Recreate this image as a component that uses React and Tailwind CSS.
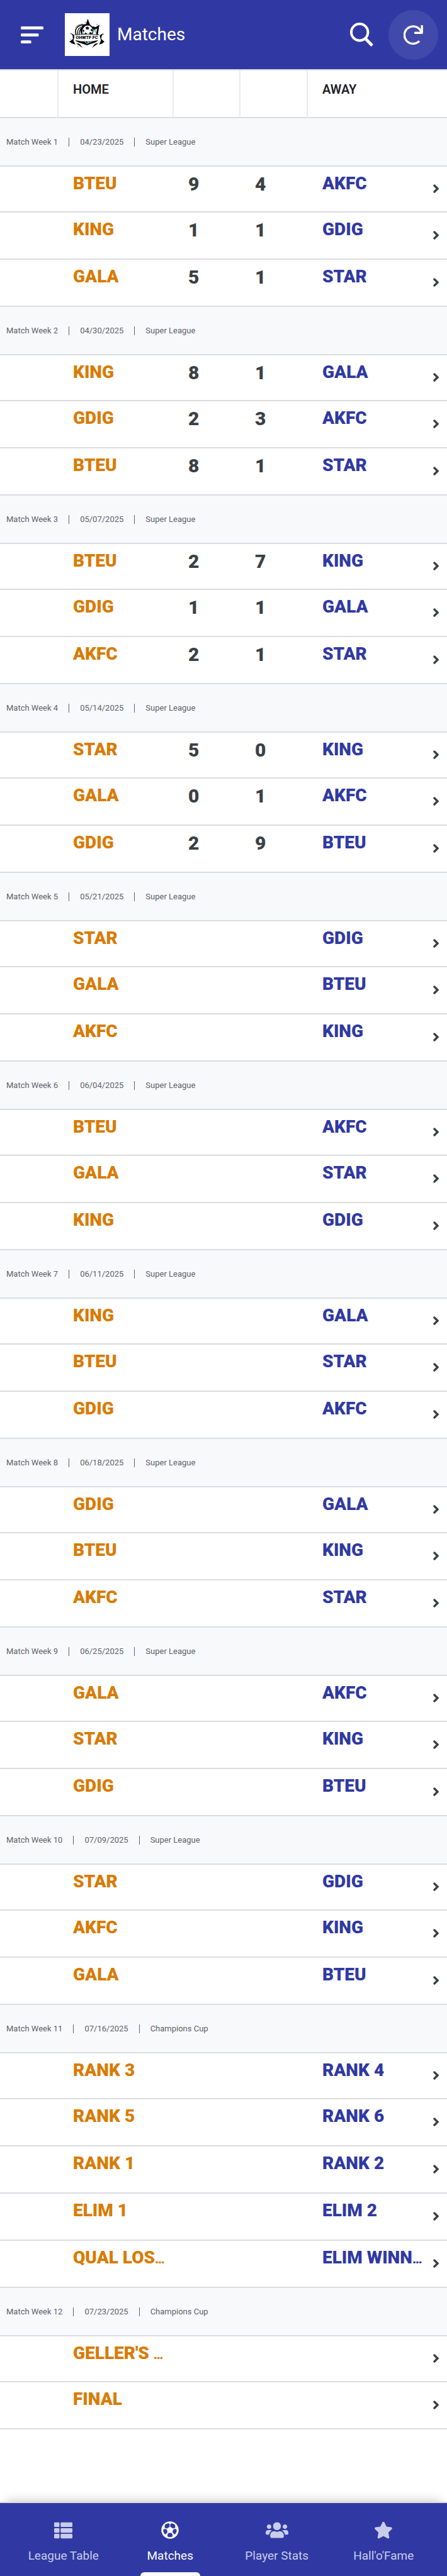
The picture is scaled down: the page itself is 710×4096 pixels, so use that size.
import React from "react";
import { FaThList, FaUsers, FaStar } from "react-icons/fa";

const LEAGUE = "Super League";
const CUP = "Champions Cup";

const WEEKS = [
  { date: "04/23/2025", cup: LEAGUE, matches: [["BTEU", 9, 4, "AKFC"], ["KING", 1, 1, "GDIG"], ["GALA", 5, 1, "STAR"]] },
  { date: "04/30/2025", cup: LEAGUE, matches: [["KING", 8, 1, "GALA"], ["GDIG", 2, 3, "AKFC"], ["BTEU", 8, 1, "STAR"]] },
  { date: "05/07/2025", cup: LEAGUE, matches: [["BTEU", 2, 7, "KING"], ["GDIG", 1, 1, "GALA"], ["AKFC", 2, 1, "STAR"]] },
  { date: "05/14/2025", cup: LEAGUE, matches: [["STAR", 5, 0, "KING"], ["GALA", 0, 1, "AKFC"], ["GDIG", 2, 9, "BTEU"]] },
  { date: "05/21/2025", cup: LEAGUE, matches: [["STAR", "", "", "GDIG"], ["GALA", "", "", "BTEU"], ["AKFC", "", "", "KING"]] },
  { date: "06/04/2025", cup: LEAGUE, matches: [["BTEU", "", "", "AKFC"], ["GALA", "", "", "STAR"], ["KING", "", "", "GDIG"]] },
  { date: "06/11/2025", cup: LEAGUE, matches: [["KING", "", "", "GALA"], ["BTEU", "", "", "STAR"], ["GDIG", "", "", "AKFC"]] },
  { date: "06/18/2025", cup: LEAGUE, matches: [["GDIG", "", "", "GALA"], ["BTEU", "", "", "KING"], ["AKFC", "", "", "STAR"]] },
  { date: "06/25/2025", cup: LEAGUE, matches: [["GALA", "", "", "AKFC"], ["STAR", "", "", "KING"], ["GDIG", "", "", "BTEU"]] },
  { date: "07/09/2025", cup: LEAGUE, matches: [["STAR", "", "", "GDIG"], ["AKFC", "", "", "KING"], ["GALA", "", "", "BTEU"]] },
  {
    date: "07/16/2025",
    cup: CUP,
    matches: [
      ["RANK 3", "", "", "RANK 4"],
      ["RANK 5", "", "", "RANK 6"],
      ["RANK 1", "", "", "RANK 2"],
      ["ELIM 1", "", "", "ELIM 2"],
      ["QUAL LOS…", "", "", "ELIM WINN…"],
    ],
  },
  { date: "07/23/2025", cup: CUP, matches: [["GELLER'S …", "", "", ""], ["FINAL", "", "", ""]] },
];

function MenuIcon() {
  return (
    <svg width="36" height="27" viewBox="0 0 36 27" fill="currentColor" aria-hidden="true">
      <rect width="36" height="4.7" rx="1.5" />
      <rect y="11.2" width="28.5" height="4.7" rx="1.5" />
      <rect y="22.3" width="16.6" height="4.7" rx="1.5" />
    </svg>
  );
}

function SearchIcon() {
  return (
    <svg width="37" height="38" viewBox="0 0 37 38" fill="none" stroke="currentColor" aria-hidden="true">
      <circle cx="15.2" cy="15.2" r="13.2" strokeWidth="4" />
      <path d="M24 25 L35.2 36.5" strokeWidth="4.8" />
    </svg>
  );
}

function RefreshIcon() {
  return (
    <svg width="31" height="31" viewBox="0 0 31 31" fill="none" stroke="currentColor" strokeWidth="3.4" aria-hidden="true">
      <path d="M25.1 25.3 A13.8 13.8 0 1 1 28 10.6" />
      <path d="M18.4 12.2 H29.2 V0.4" strokeLinejoin="round" strokeLinecap="round" />
    </svg>
  );
}

function BallIcon() {
  return (
    <svg width="28" height="28" viewBox="-63 -63 126 126" aria-hidden="true">
      <circle r="62" fill="currentColor" />
      <g fill="#3039a3" stroke="#3039a3" strokeWidth="3" strokeLinejoin="round">
        <path d="M-36 -33 L-31 -41 L-13 -47 L-4 -43 L-4 -24 L-21 -13 L-36 -17 Z" />
        <path d="M36 -33 L31 -41 L13 -47 L4 -43 L4 -24 L21 -13 L36 -17 Z" />
        <path d="M-46 -1 L-40 -8 L-25 -4 L-19 14 L-29 28 L-38 27 L-46 10 Z" />
        <path d="M46 -1 L40 -8 L25 -4 L19 14 L29 28 L38 27 L46 10 Z" />
        <path d="M-11 22 L11 22 L18 36 L14 47 L0 49 L-14 47 L-18 36 Z" />
      </g>
    </svg>
  );
}

function ChevronIcon() {
  return (
    <svg width="9" height="14" viewBox="0 0 9 14" fill="none" stroke="currentColor" strokeWidth="3.4" strokeLinecap="round" aria-hidden="true">
      <path d="M2 2 L7 7 L2 12" />
    </svg>
  );
}

function Logo() {
  return (
    <svg className="h-[68px] w-[71px] shrink-0 bg-white" viewBox="0 0 324 312" role="img" aria-label="OHWTF FC">
      <g fill="#0a0a0a">
        <path d="M166 40 L152 84 Q166 76 184 88 Z" />
        <path d="M251 84 L240 156 L228 160 L234 112 L214 124 L190 100 L206 96 L222 102 Z" />
        <path d="M42 144 L72 162 L68 176 L62 200 L76 228 L54 222 L32 208 L58 188 L56 164 Z" />
        <path d="M282 144 L252 162 L256 176 L262 200 L248 228 L270 222 L288 208 L264 188 L268 164 Z" />
        <path d="M82 222 Q96 218 108 226 L130 254 L98 232 Z" />
        <path d="M242 222 Q228 218 216 226 L196 254 L226 232 Z" />
        <path d="M72 196 Q162 216 244 196 L224 212 L160 234 L96 212 Z" />
        <circle cx="160" cy="126" r="48" />
      </g>
      <g fill="none" stroke="#0a0a0a">
        <path d="M80 156 Q68 114 100 94 Q134 80 166 88" strokeWidth="7" />
        <path d="M92 156 Q86 116 116 102" strokeWidth="6" />
        <path d="M104 158 Q102 124 124 106" strokeWidth="6" />
        <path d="M74 106 Q94 80 132 80" strokeWidth="3" />
        <path d="M232 156 V134" strokeWidth="8" />
        <path d="M148 72 L152 64 M230 84 L238 80 M44 186 L38 192 M276 158 L284 154 M90 240 L98 244 M50 152 L38 146" strokeWidth="3" />
      </g>
      <g fill="#7cc8c4">
        <path d="M126 156 Q118 116 148 96 Q130 120 138 156 Z" />
        <path d="M228 112 L224 150 L208 124 Z" />
        <path d="M140 208 H200 L162 224 Z" />
        <path d="M72 204 L92 208 L84 212 Z" />
        <path d="M176 76 L184 84 L188 78 Z" />
      </g>
      <circle cx="166" cy="126" r="36" fill="#fff" />
      <g fill="#0a0a0a">
        <path d="M150 104 L164 98 L176 106 L172 118 L156 118 Z" />
        <path d="M196 112 L202 128 L192 132 L186 120 Z" />
        <path d="M150 140 L160 148 L156 162 L140 156 Z" />
        <path d="M182 138 L196 142 L190 156 L176 150 Z" />
        <path d="M132 118 L142 126 L136 138 L130 132 Z" />
      </g>
      <path d="M66 160 Q160 144 254 160 L250 192 Q160 208 70 192 Z" fill="#fff" />
      <path d="M70 158 Q160 146 250 158" fill="none" stroke="#0a0a0a" strokeWidth="4" />
      <text x="159" y="189" textAnchor="middle" fontFamily="Roboto, sans-serif" fontWeight="900" fontSize="33" fill="#0a0a0a">
        OHWTF FC
      </text>
      <path d="M159 202 l3 6 h6 l-5 4 l2 6 l-6 -4 l-6 4 l2 -6 l-5 -4 h6 Z" fill="#0a0a0a" />
      <circle cx="142" cy="210" r="3" fill="#0a0a0a" />
      <circle cx="178" cy="210" r="3" fill="#0a0a0a" />
    </svg>
  );
}

function TeamName({ children }) {
  const cut = children.endsWith("…");
  return (
    <span className="block whitespace-nowrap">
      {cut ? children.slice(0, -1) : children}
      {cut && <span className="text-[20px]">…</span>}
    </span>
  );
}

function WeekRow({ number, date, cup }) {
  return (
    <tr>
      <th colSpan={6} scope="colgroup" className="h-[77px] border-b-2 border-[#dadce0] bg-[#f8f9fb] px-[10px] align-middle font-normal">
        <div className="flex items-center gap-[17px] text-[13px] leading-4 text-[#5f6368]">
          <span>Match Week {number}</span>
          <span className="h-[14px] w-px bg-[#5f6368]" />
          <span>{date}</span>
          <span className="h-[14px] w-px bg-[#5f6368]" />
          <span>{cup}</span>
        </div>
      </th>
    </tr>
  );
}

const CELL = "border-b-2 border-[#dadce0] p-0 pl-[23px] align-top";

function MatchRow({ match, first }) {
  const [home, homeGoals, awayGoals, away] = match;
  return (
    <tr className={first ? "h-[73px]" : "h-[75px]"}>
      <td className="border-b-2 border-[#dadce0]" />
      <td className={`${CELL} pt-[9px] text-[28px] leading-9 font-black text-[#d97b04]`}>
        <TeamName>{home}</TeamName>
      </td>
      <td className={`${CELL} pt-[10px] text-[30px] leading-9 font-black text-[#3c4043]`}>{homeGoals}</td>
      <td className={`${CELL} pt-[10px] text-[30px] leading-9 font-black text-[#3c4043]`}>{awayGoals}</td>
      <td className={`${CELL} pt-[9px] text-[28px] leading-9 font-black text-[#3039a3]`}>
        <TeamName>{away}</TeamName>
      </td>
      <td className="border-b-2 border-[#dadce0] p-0 pr-[13px] pb-[2px] align-middle">
        <button type="button" aria-label="Open match" className="ml-auto block text-[#3c4043]">
          <ChevronIcon />
        </button>
      </td>
    </tr>
  );
}

const HEAD = "h-[76px] border-b-2 border-b-[#dadce0] p-0 pt-4 pl-[23px] align-top text-[20px] leading-7 font-semibold";
const HEAD_LINE = "border-r-2 border-r-[#ebebeb]";

function MatchTable() {
  return (
    <table className="w-full table-fixed border-separate border-spacing-0 border-t-2 border-[#dadce0] text-left">
      <colgroup>
        <col className="w-[93px]" />
        <col className="w-[183px]" />
        <col className="w-[106px]" />
        <col className="w-[107px]" />
        <col />
        <col className="w-[40px]" />
      </colgroup>
      <thead className="text-[#202124]">
        <tr>
          <td className={`${HEAD} ${HEAD_LINE}`} />
          <th scope="col" className={`${HEAD} ${HEAD_LINE}`}>HOME</th>
          <td className={`${HEAD} ${HEAD_LINE}`} />
          <td className={`${HEAD} ${HEAD_LINE}`} />
          <th scope="col" colSpan={2} className={HEAD}>AWAY</th>
        </tr>
      </thead>
      {WEEKS.map((week, w) => (
        <tbody key={week.date}>
          <WeekRow number={w + 1} date={week.date} cup={week.cup} />
          {week.matches.map((match, m) => (
            <MatchRow key={m} match={match} first={m === 0} />
          ))}
        </tbody>
      ))}
    </table>
  );
}

const TABS = [
  { label: "League Table", icon: <FaThList size={29} /> },
  { label: "Matches", icon: <BallIcon />, active: true },
  { label: "Player Stats", icon: <FaUsers size={36} /> },
  { label: "Hall'o'Fame", icon: <FaStar size={30} /> },
];

function TabBar() {
  return (
    <nav className="sticky bottom-0 grid grid-cols-4 border-t-2 border-[#dadce0] bg-[#3039a3] px-4 shadow-[0_-10px_16px_-10px_rgba(0,0,0,0.25)]">
      {TABS.map((tab) => (
        <a
          key={tab.label}
          href="#"
          aria-current={tab.active ? "page" : undefined}
          className={`relative flex flex-col items-center gap-[14px] pt-7 pb-5 ${tab.active ? "text-white" : "text-[#c9cdea]"}`}
        >
          <span className="flex h-[30px] items-center">{tab.icon}</span>
          <span className="text-[19px] leading-6">{tab.label}</span>
          {tab.active && <span className="absolute bottom-0 h-[6px] w-[95px] rounded-t-[6px] bg-white" />}
        </a>
      ))}
    </nav>
  );
}

export default function App() {
  return (
    <div className="flex min-h-screen flex-col bg-white font-[Roboto,sans-serif]">
      <header className="flex h-[110px] items-center bg-[#3039a3] pr-[14px] pl-[33px] text-white">
        <button type="button" aria-label="Menu">
          <MenuIcon />
        </button>
        <div className="ml-[34px] flex items-center gap-3">
          <Logo />
          <h1 className="text-[28px] leading-9">Matches</h1>
        </div>
        <button type="button" aria-label="Search" className="ml-auto">
          <SearchIcon />
        </button>
        <button type="button" aria-label="Refresh" className="ml-6 flex size-[79px] items-center justify-center rounded-full bg-[#414aab]">
          <RefreshIcon />
        </button>
      </header>
      <main className="flex-1">
        <MatchTable />
      </main>
      <TabBar />
    </div>
  );
}
